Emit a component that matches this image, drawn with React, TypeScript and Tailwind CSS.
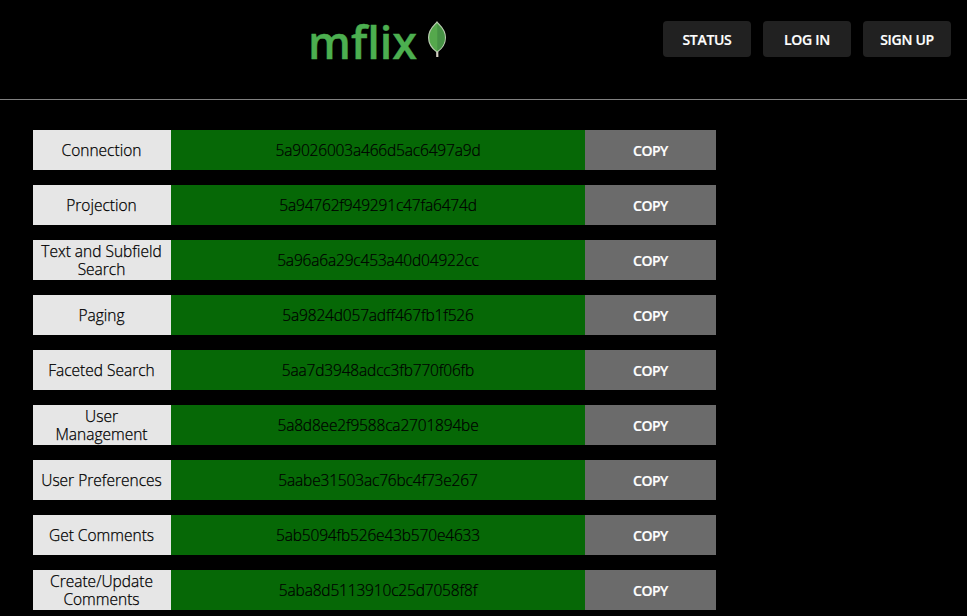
const tickets = [
  { name: "Connection", id: "5a9026003a466d5ac6497a9d" },
  { name: "Projection", id: "5a94762f949291c47fa6474d" },
  { name: "Text and Subfield Search", id: "5a96a6a29c453a40d04922cc" },
  { name: "Paging", id: "5a9824d057adff467fb1f526" },
  { name: "Faceted Search", id: "5aa7d3948adcc3fb770f06fb" },
  { name: "User Management", id: "5a8d8ee2f9588ca2701894be" },
  { name: "User Preferences", id: "5aabe31503ac76bc4f73e267" },
  { name: "Get Comments", id: "5ab5094fb526e43b570e4633" },
  { name: "Create/Update Comments", id: "5aba8d5113910c25d7058f8f" },
];

function Leaf() {
  return (
    <svg className="ml-2.5 mt-[21px] h-[37px] w-5" viewBox="0 0 20 37">
      <path d="M9.2 27h2l.2 9H9.200z" fill="#d5cfc4" />
      <path
        d="M10 1C8.500 3.500 1.600 7.500 1.600 16.500c0 7.500 4 11.500 8.400 14.500 4.400-3 8.400-7 8.400-14.500C18.400 7.500 11.500 3.500 10 1z"
        fill="#55a84c"
        stroke="#b9cbb0"
        strokeWidth="1.2"
      />
      <path d="M10.300 2.800c1.500 3 7.500 6 7.500 13.700 0 6.700-3.300 10.800-7.500 13.800z" fill="#469245" />
    </svg>
  );
}

function NavButton({ children }: { children: string }) {
  return (
    <button className="h-9 w-22 rounded bg-[#212121] pt-0.5 text-sm font-semibold tracking-[-0.3px] text-white [-webkit-text-stroke:0.2px]">
      {children}
    </button>
  );
}

export default function App() {
  return (
    <div className="h-[616px] overflow-hidden bg-black font-['Open_Sans','Noto_Sans',sans-serif]">
      <header className="flex h-[100px] items-start border-b border-[#808080] pr-4">
        <div className="flex flex-1 items-start pl-[308px]">
          <h1 className="mt-[10px] w-[109px] whitespace-nowrap text-[45px] leading-[64px] font-semibold text-[#4caf50] [-webkit-text-stroke:0.4px]">
            mflix
          </h1>
          <Leaf />
        </div>
        <nav className="mt-[21px] flex gap-3">
          <NavButton>STATUS</NavButton>
          <NavButton>LOG IN</NavButton>
          <NavButton>SIGN UP</NavButton>
        </nav>
      </header>
      <main className="flex flex-col gap-[15px] pt-[30px] pl-[33px]">
        {tickets.map((ticket) => (
          <div key={ticket.id} className="flex h-10 w-[683px] shrink-0">
            <div className="flex w-[138px] items-center justify-center bg-[#e6e6e6] pr-2 pl-[7px] text-center text-[15.5px] leading-[18px] font-light text-black [-webkit-text-stroke:0.25px]">
              {ticket.name}
            </div>
            <div className="flex w-[414px] items-center justify-center bg-[#066806] pt-0.5 text-[15.5px] font-light tracking-[-0.17px] text-black [-webkit-text-stroke:0.2px]">
              {ticket.id}
            </div>
            <button className="w-[131px] bg-[#6b6b6b] pt-0.5 text-sm font-semibold tracking-[-0.5px] text-white [-webkit-text-stroke:0.2px]">
              COPY
            </button>
          </div>
        ))}
      </main>
    </div>
  );
}
